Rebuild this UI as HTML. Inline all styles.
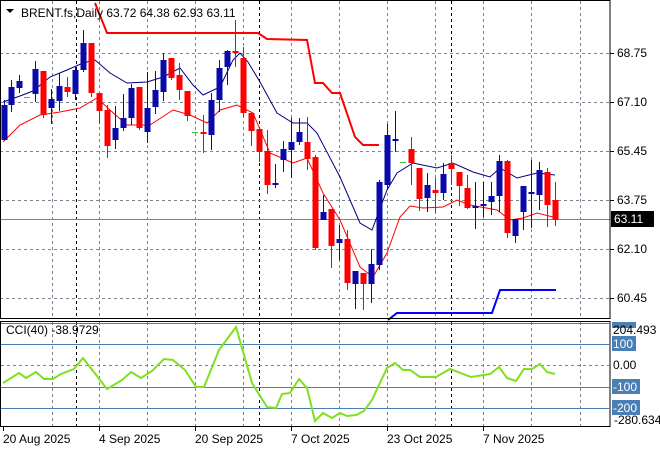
<!DOCTYPE html>
<html><head><meta charset="utf-8"><style>
html,body{margin:0;padding:0;background:#fff;width:660px;height:450px;overflow:hidden}
svg{display:block;font-family:"Liberation Sans",sans-serif;font-size:12px}
</style></head><body>
<svg id="s" width="660" height="450" xmlns="http://www.w3.org/2000/svg"></svg>
<script>
var s=document.getElementById('s'),h='';
function L(x1,y1,x2,y2,c,w,d){h+='<line x1="'+x1+'" y1="'+y1+'" x2="'+x2+'" y2="'+y2+'" stroke="'+c+'" stroke-width="'+(w||1)+'"'+(d?' stroke-dasharray="'+d+'"':'')+'/>';}
function P(pts,c,w){h+='<polyline fill="none" stroke="'+c+'" stroke-width="'+w+'" points="'+pts.map(function(p){return p.join(',')}).join(' ')+'"/>';}
function T(x,y,t,c,a){h+='<text x="'+x+'" y="'+y+'" fill="'+(c||'#000')+'"'+(a?' text-anchor="'+a+'"':'')+'>'+t+'</text>';}
var gx=[52,99,147,195,243,291,339,387,435,483,531,580];
gx.forEach(function(x){L(x+.5,1,x+.5,318,'#7a8591',1,'3,3');L(x+.5,322,x+.5,426,'#7a8591',1,'3,3');});
[76,259,451].forEach(function(x){L(x+.5,1,x+.5,318,'#000',1,'3,3');L(x+.5,322,x+.5,426,'#000',1,'3,3');});
[53,102,151,200,249,298].forEach(function(y){L(0,y+.5,610,y+.5,'#7a8591',1,'3,3');});
L(0,219.5,610,219.5,'#7a8591',1);
P([[95,3],[107,33],[258,33],[267,39],[307,40],[315,83],[323,83],[332,93],[340,93],[355,137],[363,145],[379,145]],'#f00',2);
P([[388,320],[397,313],[492,313],[500,290],[556,290]],'#00f',2);
P([[3,102],[20,96],[33,91],[50,77],[67,70],[83,63],[95,60],[110,73],[127,83],[147,82],[163,77],[180,68],[193,85],[203,95],[220,87],[233,60],[240,53],[248,62],[260,82],[277,113],[293,123],[307,123],[317,133],[340,177],[360,223],[372,230],[387,190],[397,173],[413,163],[437,168],[453,163],[473,172],[490,177],[500,168],[517,178],[537,173],[555,175]],'#00007f',1);
P([[3,142],[20,125],[40,115],[60,112],[80,108],[97,98],[110,110],[127,125],[150,125],[173,110],[190,115],[207,123],[220,110],[237,105],[253,113],[270,153],[293,163],[307,158],[323,193],[340,220],[360,267],[373,277],[387,253],[400,217],[410,206],[423,208],[443,207],[457,200],[470,205],[497,210],[510,220],[523,218],[537,213],[557,218]],'#f00',1);
var C=[[4,'b',105,140,100,140],[11,'b',87,105,80,112],[19,'b',81,88,75,93],[27,'g',97],[35,'b',69,94,61,102],[43,'r',71,115,71,118],[51,'b',99,108,89,124],[59,'b',86,101,73,111],[67,'r',87,92,77,97],[75,'b',70,94,67,100],[83,'b',43,70,30,72],[91,'r',43,93,43,97],[99,'r',93,111,93,124],[107,'r',110,146,105,158],[115,'b',128,140,106,149],[123,'b',118,128,94,131],[131,'b',88,118,84,125],[139,'r',87,128,87,130],[147,'b',108,132,72,143],[155,'b',90,107,71,114],[163,'b',60,92,53,101],[171,'r',58,78,58,80],[179,'r',75,90,63,100],[187,'r',91,116,91,121],[195,'g',132],[203,'r',132,134,115,153],[211,'b',100,135,93,150],[219,'b',68,100,60,112],[227,'b',51,67,50,85],[235,'r',51,53,20,67],[243,'r',58,113,47,117],[251,'r',113,131,113,146],[259,'r',129,152,129,162],[267,'r',151,185,130,194],[275,'b',183,185,164,188],[283,'b',149,160,141,172],[291,'b',142,150,118,178],[299,'b',132,142,118,145],[307,'r',142,159,117,170],[315,'r',157,248,155,250],[323,'b',212,220,195,220],[331,'r',209,246,209,268],[339,'b',239,243,225,260],[347,'r',239,283,230,290],[355,'b',271,284,271,309],[363,'r',273,284,273,310],[371,'b',264,284,249,303],[379,'b',182,265,180,270],[387,'b',135,185,124,190],[395,'b',139,141,111,152],[403,'g',162],[411,'r',149,163,137,185],[419,'r',168,199,168,211],[427,'b',185,198,173,212],[435,'r',190,193,178,213],[443,'b',174,193,163,200],[451,'r',163,169,155,185],[459,'r',172,186,172,206],[467,'r',188,208,175,209],[475,'b',206,208,182,229],[483,'b',204,206,182,217],[491,'b',196,202,182,215],[499,'b',161,196,155,212],[507,'r',161,233,160,238],[515,'b',219,236,219,243],[523,'b',186,212,186,230],[531,'b',192,194,160,228],[539,'b',170,195,162,210],[547,'r',172,205,168,227],[555,'r',200,220,182,226]];
C.forEach(function(c){var x=c[0];if(c[1]=='g'){L(x-3,c[2]+.5,x+3,c[2]+.5,'#3c3',1);return;}
var col=c[1]=='b'?'#0a0aa8':'#f00';L(x+.5,c[4],x+.5,c[5],col,1);h+='<rect x="'+(x-2.5)+'" y="'+c[2]+'" width="6" height="'+Math.max(1,c[3]-c[2])+'" fill="'+col+'"/>';});
h+='<rect x="0.5" y="0.5" width="609.5" height="318" fill="none" stroke="#000"/>';
h+='<rect x="0.5" y="321.5" width="609.5" height="105" fill="none" stroke="#000"/>';
h+='<polygon points="6,9 14,9 10,13" fill="#000"/>';
T(21,17,'BRENT.fs,Daily  63.72 64.38 62.93 63.11');
[[53,'68.75'],[102,'67.10'],[151,'65.45'],[200,'63.75'],[249,'62.10'],[298,'60.45']].forEach(function(p){L(610,p[0]+.5,614,p[0]+.5,'#000');T(617,p[0]+4,p[1]);});
h+='<rect x="611" y="211" width="43" height="16" fill="#000"/>';T(614,223,'63.11','#fff');
[323,344,387,408].forEach(function(y){L(1,y+.5,610,y+.5,'#4a7fb5',1);});
L(1,365.5,610,365.5,'#7a8591',1,'3,3');
P([[3,383],[19,373],[26,378],[36,372],[44,379],[53,379],[61,374],[74,369],[83,358],[107,389],[122,380],[131,372],[141,378],[152,371],[164,359],[173,360],[185,370],[196,387],[204,387],[219,350],[236,327],[252,383],[267,407],[276,408],[282,394],[290,393],[299,379],[307,388],[315,421],[323,413],[332,418],[340,413],[347,416],[356,415],[364,411],[372,400],[387,368],[395,363],[403,370],[410,370],[420,377],[436,377],[450,369],[471,377],[490,374],[499,367],[507,378],[516,381],[524,369],[532,369],[540,364],[547,372],[555,374]],'#7ee01e',2);
T(6,334,'CCI(40) -38.9729');
h+='<rect x="612" y="322" width="24" height="6" fill="#4a7fb5"/>';
T(613,334,'204.493');
h+='<rect x="612" y="336" width="24" height="15" fill="#4a7fb5"/>';T(613,348,'100','#fff');
T(613,369,'0.00');
h+='<rect x="612" y="379" width="28" height="15" fill="#4a7fb5"/>';T(613,391,'-100','#fff');
h+='<rect x="612" y="400" width="28" height="15" fill="#4a7fb5"/>';T(613,412,'-200','#fff');
T(614,424,'-280.634');
[[3,'20 Aug 2025'],[99,'4 Sep 2025'],[195,'20 Sep 2025'],[291,'7 Oct 2025'],[387,'23 Oct 2025'],[483,'7 Nov 2025']].forEach(function(d){L(d[0]+.5,427,d[0]+.5,431,'#000');T(d[0],443,d[1]);});
s.innerHTML=h;
</script>
</body></html>
